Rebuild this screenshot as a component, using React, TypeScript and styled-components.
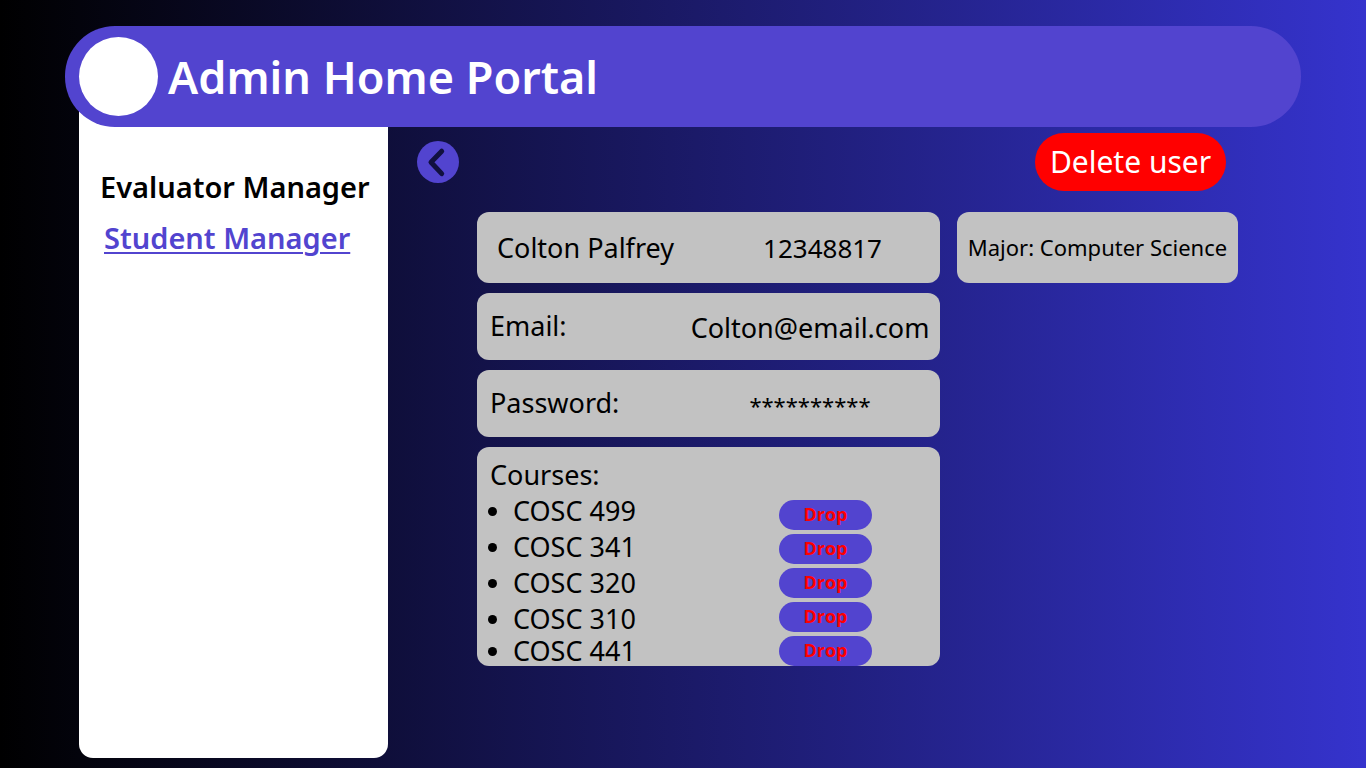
import React from "react";
import styled, { createGlobalStyle } from "styled-components";

const colors = {
  accent: "#5244cf",
  panel: "#c2c2c2",
  danger: "#ff0000",
  night: "#11103f",
};

const GlobalStyle = createGlobalStyle`
  *, *::before, *::after { box-sizing: border-box; }
  body {
    margin: 0;
    font-family: "Noto Sans", "Open Sans", sans-serif;
    color: #000;
  }
  button { font-family: inherit; border: 0; padding: 0; cursor: pointer; }
`;

const Page = styled.div`
  display: flex;
  flex-direction: column;
  min-height: 100vh;
  padding: 26px 0 10px;
  background: linear-gradient(90deg, #000000, #3533cd);
`;

const Header = styled.header`
  position: relative;
  z-index: 1;
  display: flex;
  align-items: center;
  gap: 10px;
  height: 101px;
  margin: 0 65px;
  padding: 0 14px;
  border-radius: 50px;
  background: ${colors.accent};
`;

const Avatar = styled.div`
  flex: none;
  width: 79px;
  height: 79px;
  border-radius: 50%;
  background: #fff;
`;

const Title = styled.h1`
  margin: 0;
  font-size: 45px;
  line-height: 60px;
  font-weight: 600;
  color: #fff;
`;

const Body = styled.div`
  display: flex;
  flex: 1;
  margin-top: -40px;
  padding: 0 128px 0 79px;
`;

const Sidebar = styled.nav`
  display: flex;
  flex: none;
  flex-direction: column;
  align-items: flex-start;
  gap: 11px;
  width: 309px;
  padding: 80px 18px 0 21px;
  border-radius: 0 0 14px 14px;
  background: #fff;
`;

const NavLink = styled.a<{ $active?: boolean }>`
  margin-left: ${({ $active }) => ($active ? "4px" : "0")};
  font-size: 29px;
  line-height: 40px;
  font-weight: 600;
  white-space: nowrap;
  color: ${({ $active }) => ($active ? colors.accent : "#000")};
  text-decoration: ${({ $active }) => ($active ? "underline" : "none")};
  text-decoration-thickness: 2px;
  text-underline-offset: 3px;
`;

const Main = styled.main`
  flex: 1;
  min-width: 0;
  padding: 46px 0 0 29px;
`;

const Toolbar = styled.div`
  display: flex;
  align-items: center;
  justify-content: space-between;
  padding-right: 12px;
`;

const BackButton = styled.button`
  display: grid;
  place-items: center;
  width: 42px;
  height: 42px;
  border-radius: 50%;
  background: ${colors.accent};
`;

const DeleteButton = styled.button`
  width: 191px;
  height: 58px;
  padding-bottom: 1px;
  border-radius: 29px;
  background: ${colors.danger};
  color: #fff;
  font-size: 30px;
`;

const Details = styled.div`
  display: grid;
  grid-template-columns: minmax(0, 463fr) minmax(0, 281fr);
  align-items: start;
  gap: 17px;
  margin: 21px 0 0 60px;
`;

const Stack = styled.div`
  display: flex;
  flex-direction: column;
  gap: 10px;
`;

const Card = styled.section`
  display: flex;
  align-items: center;
  justify-content: space-between;
  border-radius: 12px;
  background: ${colors.panel};
  font-size: 27px;
  line-height: 36px;
  white-space: nowrap;
`;

const IdentityCard = styled(Card)`
  height: 71px;
  padding: 0 58px 0 20px;
`;

const StudentNumber = styled.span`
  font-size: 26px;
`;

const MajorCard = styled(Card)`
  height: 71px;
  padding-bottom: 2px;
  justify-content: center;
  font-size: 22px;
`;

const FieldCard = styled(Card)`
  height: 67px;
  padding: 0 11px 1px 13px;
`;

const FieldValue = styled.span<{ $masked?: boolean }>`
  display: flex;
  justify-content: center;
  width: 238px;
  padding-top: 4px;
  font-size: ${({ $masked }) => ($masked ? "22px" : "27px")};
`;

const CoursesCard = styled(Card)`
  align-items: flex-start;
  padding: 10px 68px 0 13px;
`;

const CoursesTitle = styled.h2`
  margin: 0;
  font-size: 27px;
  line-height: 36px;
  font-weight: 400;
`;

const CourseList = styled.ul`
  margin: 0;
  padding: 0;
  list-style: none;
`;

const Course = styled.li`
  display: flex;
  align-items: center;
  gap: 16px;
  line-height: 36px;

  &::before {
    content: "";
    width: 9px;
    height: 9px;
    margin-left: -2px;
    border-radius: 50%;
    background: #000;
  }

  &:last-child { line-height: 28px; }
`;

const Actions = styled.div`
  display: flex;
  flex-direction: column;
  gap: 4px;
  padding-top: 43px;
`;

const DropButton = styled.button`
  width: 93px;
  height: 30px;
  padding-bottom: 2px;
  border-radius: 15px;
  background: ${colors.accent};
  color: ${colors.danger};
  font-family: "Open Sans", "Noto Sans", sans-serif;
  font-size: 18px;
  line-height: 28px;
  font-weight: 700;
`;

const courses = ["COSC 499", "COSC 341", "COSC 320", "COSC 310", "COSC 441"];

export default function App() {
  return (
    <>
      <GlobalStyle />
      <Page>
        <Header>
          <Avatar />
          <Title>Admin Home Portal</Title>
        </Header>
        <Body>
          <Sidebar>
            <NavLink href="#evaluators">Evaluator Manager</NavLink>
            <NavLink href="#students" $active>Student Manager</NavLink>
          </Sidebar>
          <Main>
            <Toolbar>
              <BackButton type="button" aria-label="Back">
                <svg width="42" height="42" viewBox="0 0 42 42" fill="none" stroke={colors.night} strokeWidth="5" strokeLinecap="round" strokeLinejoin="round">
                  <path d="M24.7 10.2 14 21.3 24.7 32.6" />
                </svg>
              </BackButton>
              <DeleteButton type="button">Delete user</DeleteButton>
            </Toolbar>
            <Details>
              <Stack>
                <IdentityCard>
                  <span>Colton Palfrey</span>
                  <StudentNumber>12348817</StudentNumber>
                </IdentityCard>
                <FieldCard>
                  <span>Email:</span>
                  <FieldValue>Colton@email.com</FieldValue>
                </FieldCard>
                <FieldCard>
                  <span>Password:</span>
                  <FieldValue $masked>**********</FieldValue>
                </FieldCard>
                <CoursesCard>
                  <div>
                    <CoursesTitle>Courses:</CoursesTitle>
                    <CourseList>
                      {courses.map((course) => (
                        <Course key={course}>{course}</Course>
                      ))}
                    </CourseList>
                  </div>
                  <Actions>
                    {courses.map((course) => (
                      <DropButton key={course} type="button" aria-label={`Drop ${course}`}>Drop</DropButton>
                    ))}
                  </Actions>
                </CoursesCard>
              </Stack>
              <MajorCard>Major: Computer Science</MajorCard>
            </Details>
          </Main>
        </Body>
      </Page>
    </>
  );
}
